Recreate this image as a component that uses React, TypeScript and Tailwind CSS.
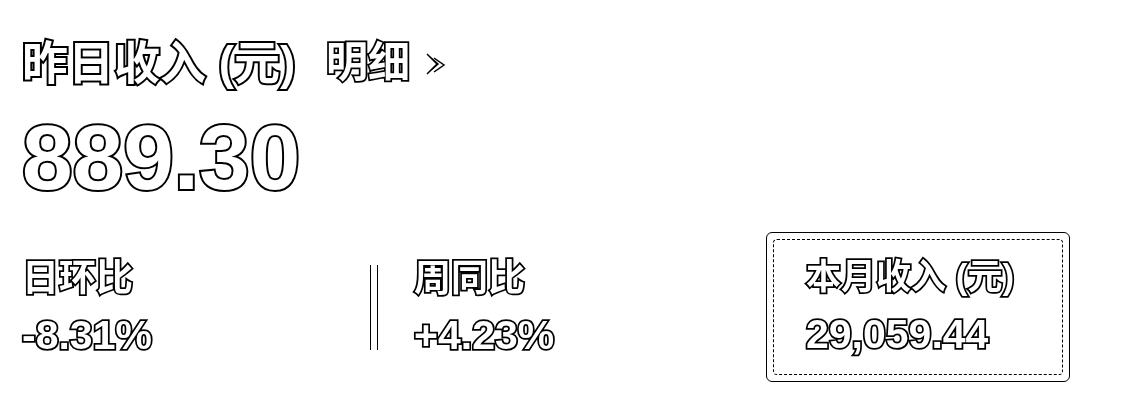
const outline = 'text-white font-bold [will-change:transform] [-webkit-text-stroke:4px_#000] [paint-order:stroke_fill]'
const thin = 'text-white font-bold [will-change:transform] [-webkit-text-stroke:3.5px_#000] [paint-order:stroke_fill]'

function Stat({ label, value }: { label: string; value: string }) {
  return (
    <div className="flex flex-col">
      <span className={`text-[37px] leading-[44px] ${thin}`}>{label}</span>
      <span className={`mt-[12px] text-[41px] leading-[44px] ${thin}`}>{value}</span>
    </div>
  )
}

export default function App() {
  return (
    <div className="h-[402px] w-[1147px] overflow-hidden bg-white pl-[22px] pt-[33px] font-['Liberation_Sans','Noto_Sans_CJK_SC',sans-serif]">
      <div className="flex items-center">
        <span className={`text-[46px] leading-[60px] ${outline}`}>昨日收入 (元)</span>
        <span className={`ml-[31px] text-[42px] leading-[60px] ${thin}`}>明细</span>
        <svg viewBox="0 0 20 24" className="ml-[16px] mt-[4px] h-[24px] w-[20px]" fill="none" stroke="#000" strokeWidth="1.5">
          <path d="M1 1l10 10-10 10M3 3l9 8-9 8" />
          <path d="M8 5l10 7-10 7" />
        </svg>
      </div>
      <div className={`mt-[20px] text-[91px] leading-[90px] ${outline}`}>889.30</div>
      <div className="mt-[29px] flex items-start">
        <div className="w-[348px] pt-[25px]">
          <Stat label="日环比" value="-8.31%" />
        </div>
        <div className="mt-[33px] h-[85px] w-[8px] border-x border-black" />
        <div className="ml-[36px] w-[352px] pt-[25px]">
          <Stat label="周同比" value="+4.23%" />
        </div>
        <div className="h-[150px] w-[304px] rounded-[6px] border border-black p-[6px]">
          <div className="h-full rounded-[4px] border border-dashed border-black pl-[32px] pt-[15px]">
            <span className={`block text-[35px] leading-[44px] ${thin}`}>本月收入 (元)</span>
            <span className={`mt-[13px] block text-[41px] leading-[44px] ${thin}`}>29,059.44</span>
          </div>
        </div>
      </div>
    </div>
  )
}
